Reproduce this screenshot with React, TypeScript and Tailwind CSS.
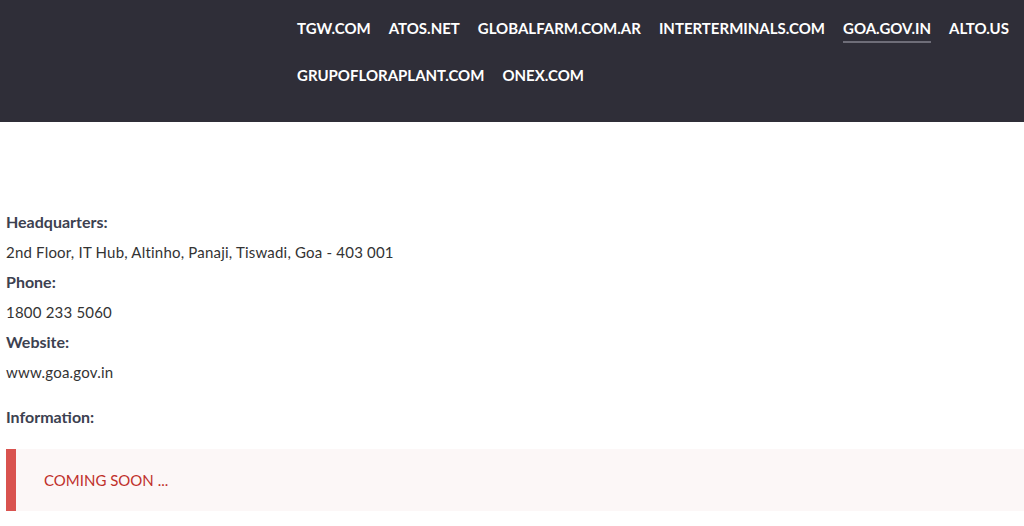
const navItems = [
  'TGW.COM',
  'ATOS.NET',
  'GLOBALFARM.COM.AR',
  'INTERTERMINALS.COM',
  'GOA.GOV.IN',
  'ALTO.US',
  'GRUPOFLORAPLANT.COM',
  'ONEX.COM',
];

const details = [
  { label: 'Headquarters:', value: '2nd Floor, IT Hub, Altinho, Panaji, Tiswadi, Goa - 403 001' },
  { label: 'Phone:', value: '1800 233 5060' },
  { label: 'Website:', value: 'www.goa.gov.in' },
];

export default function App() {
  const active = 'GOA.GOV.IN';

  return (
    <div className="min-h-screen bg-white font-['Lato',sans-serif]">
      <header className="h-[122px] bg-[#2f2e38]">
        <nav className="flex flex-wrap pl-[288px] pt-[5px]">
          {navItems.map((item) => (
            <a key={item} href="#" className="flex h-[47px] items-center px-[9px]">
              <span
                className={
                  'text-[15px] font-bold leading-none text-white ' +
                  (item === active ? 'border-b-2 border-[#6e6d78] pb-[5px] pt-[7px]' : '')
                }
              >
                {item}
              </span>
            </a>
          ))}
        </nav>
      </header>

      <main className="pl-[6px] pt-[85px]">
        {details.map((d) => (
          <div key={d.label}>
            <div className="h-[30px] text-[16px] leading-[30px] font-bold text-[#3c4150]">{d.label}</div>
            <div className="h-[30px] text-[15px] leading-[30px] tracking-[0.2px] text-[#333333]">{d.value}</div>
          </div>
        ))}
        <div className="mt-[15px] h-[30px] text-[16px] leading-[30px] font-bold text-[#3c4150]">Information:</div>

        <div className="mt-[17px] flex h-[62px] items-center border-l-[10px] border-[#d9534f] bg-[#fcf7f7] pl-[28px]">
          <span className="text-[15px] text-[#c0302b]">COMING SOON ...</span>
        </div>
      </main>
    </div>
  );
}
